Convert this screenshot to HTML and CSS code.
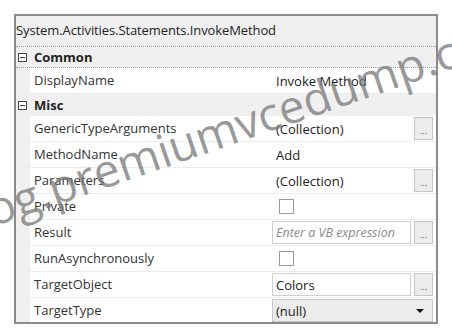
FILE: index.html
```html
<!DOCTYPE html>
<html lang="en">
<head>
  <meta charset="UTF-8" />
  <title>InvokeMethod Properties</title>
  <link rel="stylesheet" href="styles.css">
</head>
<body>
  <div class="grid-panel">
    <div class="title">System.Activities.Statements.InvokeMethod</div>

    <div class="cat"><span class="toggle"></span>Common</div>
    <div class="row">
      <div class="name">DisplayName</div>
      <div class="value plain">Invoke Method</div>
    </div>

    <div class="cat"><span class="toggle"></span>Misc</div>
    <div class="row">
      <div class="name">GenericTypeArguments</div>
      <div class="value"><span class="box">(Collection)</span><span class="dots">...</span></div>
    </div>
    <div class="row">
      <div class="name">MethodName</div>
      <div class="value plain">Add</div>
    </div>
    <div class="row">
      <div class="name">Parameters</div>
      <div class="value"><span class="box">(Collection)</span><span class="dots">...</span></div>
    </div>
    <div class="row">
      <div class="name">Private</div>
      <div class="value plain"><span class="check"></span></div>
    </div>
    <div class="row">
      <div class="name">Result</div>
      <div class="value"><span class="box input hint">Enter a VB expression</span><span class="dots">...</span></div>
    </div>
    <div class="row">
      <div class="name">RunAsynchronously</div>
      <div class="value plain"><span class="check"></span></div>
    </div>
    <div class="row">
      <div class="name">TargetObject</div>
      <div class="value"><span class="box input">Colors</span><span class="dots">...</span></div>
    </div>
    <div class="row">
      <div class="name">TargetType</div>
      <div class="value"><span class="combo">(null)<span class="arrow"></span></span></div>
    </div>
  </div>

  <div class="watermark">blog.premiumvcedump.com</div>
</body>
</html>
```

FILE: styles.css
```css
body {
  font-family: "Open Sans", "Noto Sans", sans-serif;
  font-size: 13px;
  color: #222;
  background: white;
  margin: 0;
  padding: 14px;
  overflow: hidden;
}
.grid-panel {
  width: 420px;
  height: 306px;
  border: 2px solid #8c8c8c;
  background: #f0f0f0;
  overflow: hidden;
}
.title {
  height: 31px;
  line-height: 29px;
  border-bottom: 1px dotted #9a9a9a;
  box-sizing: border-box;
  letter-spacing: -0.1px;
}
.cat {
  display: flex;
  align-items: center;
  height: 21px;
  font-weight: bold;
  border-bottom: 1px dotted #9a9a9a;
  box-sizing: border-box;
}
.cat:nth-of-type(4) {
  height: 22px;
  border-bottom: none;
}
.toggle {
  width: 7px;
  height: 7px;
  border: 1px solid #444;
  margin: 0 7px 0 2px;
  position: relative;
  background: white;
}
.toggle::after {
  content: "";
  position: absolute;
  left: 1px;
  right: 1px;
  top: 3px;
  height: 1px;
  background: #333;
}
.row {
  display: grid;
  grid-template-columns: 242px 1fr;
  height: 26px;
  margin-left: 14px;
  background: white;
  border-bottom: 1px solid #ececec;
  box-sizing: border-box;
}
.name {
  padding-left: 4px;
  line-height: 25px;
  color: #333;
}
.value {
  display: flex;
  align-items: stretch;
  padding: 1px 3px 1px 0;
}
.value.plain {
  align-items: center;
  padding-left: 4px;
}
.box {
  flex: 1;
  display: flex;
  align-items: center;
  padding-left: 3px;
  border: 1px solid transparent;
}
.box.input {
  border-color: #d0d0d0;
}
.hint {
  font-style: italic;
  color: #8a8a8a;
  font-size: 12.5px;
  white-space: nowrap;
  overflow: hidden;
}
.dots {
  width: 19px;
  margin-left: 3px;
  background: #ececec;
  border: 1px solid #c6c6c6;
  font-size: 9px;
  line-height: 1;
  color: #555;
  display: flex;
  align-items: flex-end;
  justify-content: center;
  padding-bottom: 4px;
  box-sizing: border-box;
}
.check {
  width: 13px;
  height: 13px;
  border: 1px solid #9a9a9a;
  background: white;
  margin-left: 3px;
}
.combo {
  flex: 1;
  display: flex;
  align-items: center;
  justify-content: space-between;
  padding: 0 8px 0 3px;
  background: #ececec;
  border: 1px solid #c8c8c8;
}
.arrow {
  width: 0;
  height: 0;
  border-left: 4px solid transparent;
  border-right: 4px solid transparent;
  border-top: 4px solid #111;
}
.watermark {
  position: absolute;
  left: -40px;
  top: 190px;
  font-family: "Open Sans", sans-serif;
  font-size: 46px;
  color: rgba(120, 120, 120, 0.75);
  transform: rotate(-19deg);
  transform-origin: left bottom;
  white-space: nowrap;
  pointer-events: none;
}
```
